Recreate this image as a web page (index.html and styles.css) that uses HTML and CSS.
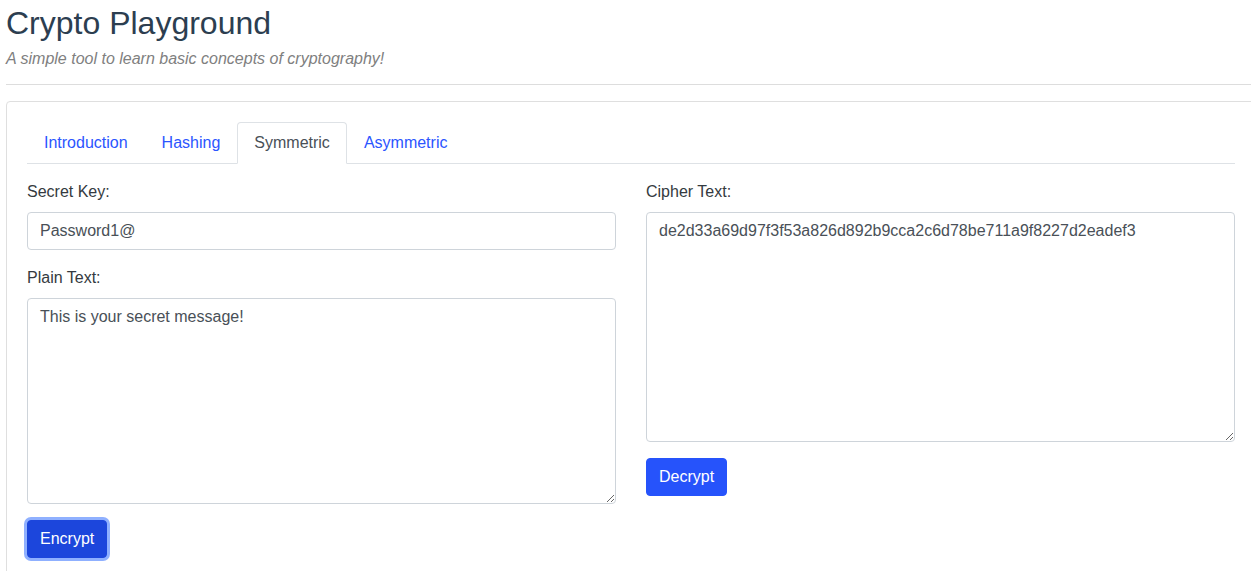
FILE: index.html
```html
<!DOCTYPE html>
<html lang="en">
<head>
<meta charset="utf-8">
<title>Crypto Playground</title>
<link rel="stylesheet" href="styles.css">
</head>
<body>
<div class="page">
  <header class="header">
    <h1 class="title">Crypto Playground</h1>
    <p class="subtitle">A simple tool to learn basic concepts of cryptography!</p>
  </header>
  <hr class="rule">
  <div class="card">
    <ul class="tabs">
      <li class="tab">Introduction</li>
      <li class="tab">Hashing</li>
      <li class="tab active">Symmetric</li>
      <li class="tab">Asymmetric</li>
    </ul>
    <div class="row">
      <div class="col">
        <label class="label">Secret Key:</label>
        <input class="field" type="text" value="Password1@">
        <label class="label">Plain Text:</label>
        <textarea class="field area-plain">This is your secret message!</textarea>
        <button class="btn btn-focus">Encrypt</button>
      </div>
      <div class="col">
        <label class="label">Cipher Text:</label>
        <textarea class="field area-cipher">de2d33a69d97f3f53a826d892b9cca2c6d78be711a9f8227d2eadef3</textarea>
        <button class="btn">Decrypt</button>
      </div>
    </div>
  </div>
</div>
</body>
</html>
```
FILE: styles.css
```css
html {
  overflow: hidden;
}
body {
  margin: 0;
  font-family: "Liberation Sans", Arial, sans-serif;
  color: #212529;
  background: #fff;
}
.page {
  padding-left: 6px;
  width: 1251px;
}
.header {
  padding-top: 4px;
}
.title {
  margin: 0;
  font-size: 32px;
  font-weight: 400;
  line-height: 38px;
  color: #2c3e50;
}
.subtitle {
  margin: 7px 0 0;
  font-size: 16px;
  font-style: italic;
  color: #808080;
  line-height: 19px;
}
.rule {
  margin: 16px 0 16px;
  border: 0;
  border-top: 1px solid #dddddd;
  height: 0;
}
.card {
  border: 1px solid #dfdfdf;
  border-radius: 4px;
  padding: 20px 20px 40px;
  width: 1208px;
}
.tabs {
  list-style: none;
  margin: 0;
  padding: 0;
  display: flex;
  border-bottom: 1px solid #dee2e6;
}
.tab {
  padding: 8px 16px;
  line-height: 24px;
  font-size: 16px;
  color: #2b55ff;
  border: 1px solid transparent;
  border-top-left-radius: 4px;
  border-top-right-radius: 4px;
  margin-bottom: -1px;
}
.tab.active {
  color: #495057;
  border-color: #dee2e6 #dee2e6 #fff;
  background: #fff;
}
.row {
  display: grid;
  grid-template-columns: 1fr 1fr;
  column-gap: 30px;
  padding-top: 16px;
}
.col {
  display: flex;
  flex-direction: column;
  align-items: flex-start;
}
.label {
  font-size: 16px;
  line-height: 24px;
  margin-bottom: 8px;
  color: #343a40;
}
.field {
  box-sizing: border-box;
  width: 100%;
  font-family: "Liberation Sans", Arial, sans-serif;
  font-size: 16px;
  line-height: 24px;
  color: #495057;
  border: 1px solid #ced4da;
  border-radius: 4px;
  padding: 6px 12px;
  margin: 0 0 16px;
  background: #fff;
}
input.field {
  height: 38px;
}
.area-plain {
  height: 206px;
  resize: vertical;
  margin-bottom: 16px;
}
.area-cipher {
  height: 230px;
  resize: vertical;
  margin-bottom: 16px;
}
.btn {
  font-family: "Liberation Sans", Arial, sans-serif;
  font-size: 16px;
  line-height: 24px;
  padding: 6px 12px;
  border: 1px solid #2653fb;
  border-radius: 4px;
  background: #2653fb;
  color: #fff;
}
.btn-focus {
  background: #1c46dc;
  border-color: #1c46dc;
  box-shadow: 0 0 0 3px #8fb0ff;
}
```
